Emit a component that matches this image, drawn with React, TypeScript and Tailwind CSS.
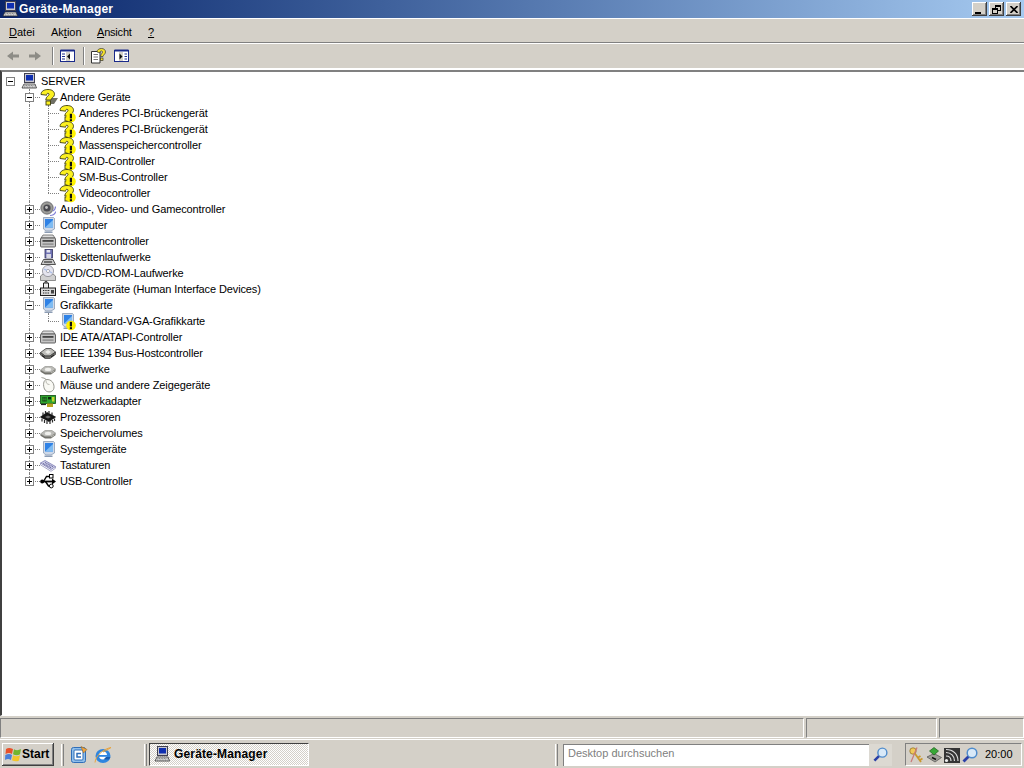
import type { ReactNode } from "react";

const raised = "shadow-[inset_-1px_-1px_0_#404040,inset_1px_1px_0_#ffffff,inset_-2px_-2px_0_#808080]";

function Ico({ children, w = 16, h = 16 }: { children: ReactNode; w?: number; h?: number }) {
  return (
    <svg width={w} height={h} viewBox={`0 0 ${w} ${h}`} className="shrink-0 block">
      {children}
    </svg>
  );
}

function ComputerIcon() {
  return (
    <Ico>
      <rect x="3.5" y="0.5" width="10" height="9" fill="#c8c8d0" stroke="#404050" />
      <rect x="5" y="2" width="7" height="5.5" fill="#0f2fb0" />
      <path d="M1 15 L3 11 H14 L15.5 15 Z" fill="#e8e8e8" stroke="#303030" strokeWidth="0.8" />
      <path d="M3.5 12.5 H13.5 M3 14 H14" stroke="#505050" strokeWidth="0.7" strokeDasharray="1 0.6" />
    </Ico>
  );
}

function QuestionGlyph() {
  return (
    <g>
      <path
        d="M1 5.5 C1 2 4.5 0.5 8 0.5 C12 0.5 14.5 2.5 14.5 5.3 C14.5 8.4 11.2 8.8 10.8 11 H5.8 C5.8 7.4 9 7 9 5.4 C9 4.6 8.5 4.3 8 4.3 C7 4.3 6.6 5 6.6 6.2 Z"
        fill="#fbf020"
        stroke="#3c3c12"
        strokeWidth="0.9"
      />
      <rect x="6" y="12" width="4.5" height="4" fill="#fbf020" stroke="#3c3c12" strokeWidth="0.9" />
    </g>
  );
}

function UnknownIcon() {
  return (
    <Ico w={18} h={18}>
      <path d="M8 15 L11 9 H18 L14 15 Z" fill="#6f6f64" />
      <QuestionGlyph />
    </Ico>
  );
}

function WarnBadge() {
  return (
    <g>
      <circle cx="12" cy="12.5" r="4.8" fill="#fff200" />
      <rect x="10.8" y="8.8" width="2.2" height="4.6" fill="#101010" />
      <rect x="10.8" y="14.2" width="2.2" height="2" fill="#101010" />
    </g>
  );
}

function UnknownWarnIcon() {
  return (
    <Ico w={18} h={18}>
      <QuestionGlyph />
      <WarnBadge />
    </Ico>
  );
}

function MonitorShape() {
  return (
    <>
      <path d="M3.5 0.5 H13.5 L14.5 1.5 V12 L11 14 H6 L3.5 12 Z" fill="#cfd9e8" stroke="#7f90a8" strokeWidth="0.7" />
      <rect x="5" y="2" width="8" height="8.5" fill="#2f82e6" />
      <path d="M5 10.5 L13 3 V10.5 Z" fill="#7fbcf2" />
      <path d="M4.5 14.5 H12.5 V16 H4.5 Z" fill="#8d9db4" />
    </>
  );
}

function MonitorIcon() {
  return (
    <Ico>
      <MonitorShape />
    </Ico>
  );
}

function MonitorWarnIcon() {
  return (
    <Ico w={18} h={18}>
      <MonitorShape />
      <WarnBadge />
    </Ico>
  );
}

function SpeakerIcon() {
  return (
    <Ico>
      <circle cx="7" cy="7" r="6.2" fill="#9c9c98" stroke="#55555a" strokeWidth="0.7" />
      <circle cx="7" cy="7" r="3.6" fill="#4a4a50" />
      <circle cx="6.5" cy="6.5" r="1.4" fill="#c4c4c4" />
      <path d="M13 10 C14.5 9 15.5 7.5 15.5 5.5 M10 14.5 C12.5 14.5 15 13 16 10.5" stroke="#8282d8" strokeWidth="1.2" fill="none" />
    </Ico>
  );
}

function FloppyDriveIcon() {
  return (
    <Ico>
      <path d="M1 5 L3 2 H13 L15 5 Z" fill="#dcdcdc" stroke="#555" strokeWidth="0.7" />
      <rect x="0.5" y="5" width="15" height="9" rx="1" fill="#c4c4c4" stroke="#444" strokeWidth="0.8" />
      <rect x="2.5" y="7" width="11" height="1.8" fill="#444" />
      <rect x="2.5" y="10.4" width="11" height="1.4" fill="#8a8a8a" />
    </Ico>
  );
}

function FloppyPcIcon() {
  return (
    <Ico>
      <rect x="5" y="0.5" width="7.5" height="8.5" fill="#6f72b4" stroke="#34345c" strokeWidth="0.8" />
      <rect x="6.6" y="1" width="3.6" height="2.5" fill="#e4e4ee" />
      <rect x="6.4" y="5" width="4.6" height="4" fill="#d8d8e4" />
      <path d="M1 15.5 L3.5 10.5 H13 L15.5 15.5 Z" fill="#c8c8c8" stroke="#303030" strokeWidth="0.8" />
      <path d="M4 13 H12" stroke="#333" strokeWidth="1.2" />
    </Ico>
  );
}

function CdIcon() {
  return (
    <Ico>
      <path d="M0.5 11 L3 9 H13 L15.5 11 V15.5 H0.5 Z" fill="#d0d0d0" stroke="#666" strokeWidth="0.7" />
      <circle cx="8" cy="6" r="5.6" fill="#e4e4ee" stroke="#808088" strokeWidth="0.7" />
      <circle cx="8" cy="6" r="1.6" fill="#fff" stroke="#808088" strokeWidth="0.6" />
      <path d="M4 4 L7 5.5 M12 8 L9.5 6.5" stroke="#a8bde8" strokeWidth="1.2" />
    </Ico>
  );
}

function InputIcon() {
  return (
    <Ico>
      <path d="M3.5 7 V2 H8.5 V7" fill="#ededed" stroke="#1f1f1f" strokeWidth="1" />
      <path d="M5 2 V0.5 H7 V2" fill="none" stroke="#1f1f1f" strokeWidth="0.8" />
      <rect x="0.5" y="7" width="15" height="7.5" fill="#d8d8d8" stroke="#1f1f1f" />
      <path d="M3 9.5 H10 M3 12 H9" stroke="#222" strokeWidth="1.1" strokeDasharray="1 0.7" />
      <rect x="11" y="9" width="3" height="3.5" fill="#444" />
    </Ico>
  );
}

function ChipDriveIcon() {
  return (
    <Ico>
      <path d="M0.5 7.5 L6 3.5 H11 L15.5 7 L10 11 H5 Z" fill="#bdbdb9" stroke="#3f3f3f" strokeWidth="0.8" />
      <path d="M0.5 7.5 V10 L5 13.5 H10 L15.5 9.5 V7 L10 11 H5 Z" fill="#6e6e6a" stroke="#3a3a3a" strokeWidth="0.7" />
      <path d="M5 7 L8 5 L11 7 L8 9 Z" fill="#ededea" />
      <path d="M2 10.5 L5 12.5 M11 12 L14 10" stroke="#111" strokeWidth="0.9" />
    </Ico>
  );
}

function DiskIcon() {
  return (
    <Ico>
      <path d="M0.5 9 L5 5.5 H12 L15.5 8 L11 11.5 H5 Z" fill="#bcbcb8" stroke="#8a8a85" strokeWidth="0.6" />
      <path d="M0.5 9 V10.8 L5 13.5 H11 L15.5 10.2 V8 L11 11.5 H5 Z" fill="#72726c" />
      <ellipse cx="8" cy="8.4" rx="3.2" ry="1.6" fill="#efefec" />
      <path d="M11 12 L14.5 9.8" stroke="#d8d8d0" strokeWidth="0.7" />
    </Ico>
  );
}

function MouseIcon() {
  return (
    <Ico>
      <path d="M7 2.5 C3 2.5 3 9 4.5 12 C6.2 15.6 11.5 16 13.5 12.5 C15 9.5 13.5 2.5 7 2.5 Z" fill="#f9f9f4" stroke="#8a8a82" strokeWidth="0.9" />
      <path d="M6 3.5 C6 6 7 7.5 9.5 7.5" stroke="#a8a8a0" strokeWidth="0.8" fill="none" />
      <path d="M6 2.5 C5 1 3 1 1.5 0.5" stroke="#92928a" strokeWidth="0.9" fill="none" />
    </Ico>
  );
}

function NetworkIcon() {
  return (
    <Ico>
      <rect x="0.5" y="2.5" width="15" height="8" fill="#2fa52f" stroke="#0f4a10" strokeWidth="0.8" />
      <rect x="2.5" y="4" width="4" height="4.5" fill="#0d2f0d" />
      <path d="M3.8 4 V8.5 M5.2 4 V8.5 M2.5 6.2 H6.5" stroke="#49c049" strokeWidth="0.5" />
      <rect x="8" y="4" width="3" height="2.4" fill="#0d2f0d" />
      <rect x="12" y="4" width="2.4" height="4.5" fill="#c5d62e" />
      <path d="M7 10.5 H13 V14 H7 Z" fill="#b7a41f" />
      <path d="M1 11.5 H6" stroke="#222" strokeWidth="1.2" />
    </Ico>
  );
}

function CpuIcon() {
  return (
    <Ico>
      <path d="M0.5 8 L7 3.5 L15.5 8 L9 12.5 Z" fill="#161616" stroke="#000" strokeWidth="0.7" />
      <path d="M2 9.5 V12.5 M4.5 11 V14 M7 12 V15 M10 12 V15 M12.5 11 V13.5 M14.5 9.5 V12 M3 6 V3.5 M5.5 4.5 V2 M9 4.5 V2 M12 6 V3.5" stroke="#2a2a2a" strokeWidth="1.2" />
      <path d="M5 8 L8 6.5 L11 8 L8 9.5 Z" fill="#6a6a6a" />
    </Ico>
  );
}

function KeyboardIcon() {
  return (
    <Ico>
      <path d="M0.5 6 L5 3.5 L15.5 9.5 L11 12.5 Z" fill="#cfcfe8" stroke="#7c7cb2" strokeWidth="0.8" />
      <path d="M3 6.5 L11.5 11 M5 5.5 L13.2 10" stroke="#66669e" strokeWidth="1.1" strokeDasharray="1 0.6" />
      <path d="M0.5 6 V7.8 L11 14.3 L15.5 11.2 V9.5" fill="none" stroke="#9090ba" strokeWidth="0.8" />
    </Ico>
  );
}

function UsbIcon() {
  return (
    <Ico>
      <path d="M1.5 8.5 H13" stroke="#000" strokeWidth="1.8" />
      <path d="M12 5.5 L16 8.5 L12 11.5 Z" fill="#000" />
      <path d="M3.5 8.5 L6.5 3.5 H10" stroke="#000" strokeWidth="1.4" fill="none" />
      <rect x="9.5" y="1.5" width="3.5" height="3.5" fill="#fff" stroke="#000" />
      <path d="M5.5 8.5 L8.5 13 H10" stroke="#000" strokeWidth="1.4" fill="none" />
      <circle cx="11.3" cy="13" r="1.9" fill="#fff" stroke="#000" />
      <circle cx="2.2" cy="8.5" r="2" fill="#000" />
    </Ico>
  );
}

// - / + box on tree nodes
function Expander({ open }: { open: boolean }) {
  return (
    <span className="relative z-10 block h-[9px] w-[9px] border border-[#808080] bg-white">
      <span className="absolute left-[1px] top-[3px] h-px w-[5px] bg-black" />
      {!open && <span className="absolute left-[3px] top-[1px] h-[5px] w-px bg-black" />}
    </span>
  );
}

type RowProps = {
  level: 1 | 2;
  open?: boolean;
  lastChild?: boolean;
  lastTop?: boolean;
  icon: ReactNode;
  label: string;
};

function TreeRow({ level, open, lastChild, lastTop, icon, label }: RowProps) {
  return (
    <div className="flex h-4 items-center">
      <span className="w-[19px] shrink-0" />
      <span className={`relative flex h-4 shrink-0 items-center pl-[5px] ${level === 1 ? "w-[20px]" : "w-[19px]"}`}>
        <span className={`absolute left-[9px] top-0 border-l border-dotted border-[#808080] ${lastTop ? "h-2" : "h-4"}`} />
        {level === 1 && <span className="absolute left-[9px] top-2 w-[11px] border-t border-dotted border-[#808080]" />}
        {level === 1 && <Expander open={!!open} />}
      </span>
      {level === 2 && (
        <span className="relative h-4 w-[20px] shrink-0">
          <span className={`absolute left-[9px] top-0 border-l border-dotted border-[#808080] ${lastChild ? "h-2" : "h-4"}`} />
          <span className="absolute left-[9px] top-2 w-[11px] border-t border-dotted border-[#808080]" />
        </span>
      )}
      <span className="relative z-10 h-4 w-4 shrink-0">{icon}</span>
      <span className="ml-[4px] whitespace-nowrap tracking-[-0.12px]">{label}</span>
    </div>
  );
}

function RootRow() {
  return (
    <div className="flex h-4 items-center">
      <span className="flex h-4 w-[20px] shrink-0 items-center pl-[5px]">
        <Expander open />
      </span>
      <span className="relative z-10 h-4 w-4 shrink-0">
        <ComputerIcon />
      </span>
      <span className="ml-[4px] whitespace-nowrap tracking-[-0.12px]">SERVER</span>
    </div>
  );
}

const devices: RowProps[] = [
  { level: 1, open: true, icon: <UnknownIcon />, label: "Andere Geräte" },
  { level: 2, icon: <UnknownWarnIcon />, label: "Anderes PCI-Brückengerät" },
  { level: 2, icon: <UnknownWarnIcon />, label: "Anderes PCI-Brückengerät" },
  { level: 2, icon: <UnknownWarnIcon />, label: "Massenspeichercontroller" },
  { level: 2, icon: <UnknownWarnIcon />, label: "RAID-Controller" },
  { level: 2, icon: <UnknownWarnIcon />, label: "SM-Bus-Controller" },
  { level: 2, lastChild: true, icon: <UnknownWarnIcon />, label: "Videocontroller" },
  { level: 1, icon: <SpeakerIcon />, label: "Audio-, Video- und Gamecontroller" },
  { level: 1, icon: <MonitorIcon />, label: "Computer" },
  { level: 1, icon: <FloppyDriveIcon />, label: "Diskettencontroller" },
  { level: 1, icon: <FloppyPcIcon />, label: "Diskettenlaufwerke" },
  { level: 1, icon: <CdIcon />, label: "DVD/CD-ROM-Laufwerke" },
  { level: 1, icon: <InputIcon />, label: "Eingabegeräte (Human Interface Devices)" },
  { level: 1, open: true, icon: <MonitorIcon />, label: "Grafikkarte" },
  { level: 2, lastChild: true, icon: <MonitorWarnIcon />, label: "Standard-VGA-Grafikkarte" },
  { level: 1, icon: <FloppyDriveIcon />, label: "IDE ATA/ATAPI-Controller" },
  { level: 1, icon: <ChipDriveIcon />, label: "IEEE 1394 Bus-Hostcontroller" },
  { level: 1, icon: <DiskIcon />, label: "Laufwerke" },
  { level: 1, icon: <MouseIcon />, label: "Mäuse und andere Zeigegeräte" },
  { level: 1, icon: <NetworkIcon />, label: "Netzwerkadapter" },
  { level: 1, icon: <CpuIcon />, label: "Prozessoren" },
  { level: 1, icon: <DiskIcon />, label: "Speichervolumes" },
  { level: 1, icon: <MonitorIcon />, label: "Systemgeräte" },
  { level: 1, icon: <KeyboardIcon />, label: "Tastaturen" },
  { level: 1, lastTop: true, icon: <UsbIcon />, label: "USB-Controller" },
];

function WinBtn({ children }: { children: ReactNode }) {
  return (
    <span className={`relative ml-[2px] flex h-[14px] w-[15px] items-center justify-center bg-[#d4d0c8] ${raised}`}>
      {children}
    </span>
  );
}

function Menu({ pre, u, post, className = "" }: { pre?: string; u: string; post?: string; className?: string }) {
  return (
    <span className={`whitespace-nowrap ${className}`}>
      {pre}
      <span className="underline underline-offset-1">{u}</span>
      {post}
    </span>
  );
}

function PanelIcon({ flip }: { flip?: boolean }) {
  return (
    <Ico w={15} h={14}>
      <rect x="0.5" y="1.5" width="14" height="11" fill="#fff" stroke="#1a2a8a" />
      <rect x="0.5" y="0.5" width="14" height="2" fill="#1a2a8a" />
      <path d={flip ? "M5 3 H9 V12 H5 Z" : "M6 3 H10 V12 H6 Z"} fill="#d4d0c8" />
      {flip ? (
        <>
          <path d="M5.5 4.5 V10.5 L8.5 7.5 Z" fill="#101010" />
          <path d="M10.5 5 H13 M10.5 7.5 H13 M10.5 10 H13" stroke="#1a2a8a" />
        </>
      ) : (
        <>
          <path d="M2 5 H5 M2 7.5 H5 M2 10 H5" stroke="#1a2a8a" />
          <path d="M10 4.5 V10.5 L7 7.5 Z" fill="#101010" />
        </>
      )}
    </Ico>
  );
}

function HelpIcon() {
  return (
    <Ico>
      <path d="M1.5 3.5 H10 V15 H1.5 Z" fill="#fff" stroke="#333" />
      <path d="M3.5 6.5 H8 M3.5 9 H8 M3.5 11.5 H8" stroke="#777" />
      <path
        d="M7 4 C7 1.5 9.5 0.5 11.5 0.5 C14 0.5 15.5 2 15.5 4 C15.5 6 13.5 6.5 13 8.5 H10.5 C10.5 6 12.5 5.5 12.5 4 C12.5 3 11.5 2.8 11 3 C10 3.2 10 4 10 4.8 Z"
        fill="#f7e32a"
        stroke="#333"
        strokeWidth="0.7"
      />
      <rect x="10.5" y="10" width="2.5" height="2.5" fill="#f7e32a" stroke="#333" strokeWidth="0.7" />
    </Ico>
  );
}

function Arrow({ right }: { right?: boolean }) {
  return (
    <svg width="14" height="12" viewBox="0 0 14 12" className="block">
      <path
        d={right ? "M1 4.5 H7 V1.5 L13 6 L7 10.5 V7.5 H1 Z" : "M13 4.5 H7 V1.5 L1 6 L7 10.5 V7.5 H13 Z"}
        fill="#8d8c86"
      />
    </svg>
  );
}

function WinFlag() {
  return (
    <svg width="17" height="16" viewBox="0 0 17 16" className="block">
      <path d="M1 3 C3 1.5 5 1.5 8 3 L7 8 C5 6.8 3 6.8 0.5 8 Z" fill="#e8502a" />
      <path d="M9 3.2 C11 4.5 13.5 4.5 16 3 L15 8.2 C13 9.5 10.5 9.5 8 8.2 Z" fill="#72b52e" />
      <path d="M0.3 9 C3 7.8 5 7.8 7 9 L6 14 C4 12.8 2 12.8 0 14 Z" fill="#4a7fd8" />
      <path d="M8 9.2 C10.5 10.5 12.5 10.5 15 9.2 L14 14.4 C12 15.6 9.5 15.6 7 14.2 Z" fill="#f3c52a" />
    </svg>
  );
}

function OutlookIcon() {
  return (
    <Ico w={18} h={18}>
      <rect x="1.5" y="1.5" width="14" height="15" rx="2" fill="#8fbeea" stroke="#2f6eb8" />
      <rect x="4" y="4" width="9" height="10" rx="1" fill="#fff" stroke="#2f6eb8" />
      <path d="M11 7.5 H7 V11 H11" fill="none" stroke="#2f6eb8" strokeWidth="1.5" />
      <path d="M11 0.5 L17 3.5 L13.5 7 Z" fill="#f0a540" stroke="#8d5d16" strokeWidth="0.5" />
    </Ico>
  );
}

function IeIcon() {
  return (
    <Ico w={18} h={18}>
      <ellipse cx="9" cy="10" rx="7.5" ry="7" fill="#2f86e0" />
      <circle cx="9" cy="9.5" r="4" fill="#fff" />
      <rect x="5" y="9" width="8" height="1.8" fill="#2f86e0" />
      <path d="M9.5 13.5 H15 L16.5 11 H12 Z" fill="#1a5cad" />
      <path d="M1 16.5 C1.5 10 9 3 17 1.5 C14 3.5 11.5 5 9 6" stroke="#e9a53d" strokeWidth="1" fill="none" />
    </Ico>
  );
}

function LensIcon({ size = 16 }: { size?: number }) {
  return (
    <svg width={size} height={size} viewBox="0 0 16 16" className="block shrink-0">
      <circle cx="10" cy="6" r="4.8" fill="#d8e9f8" stroke="#4f8ccc" strokeWidth="1.5" />
      <path d="M6.3 9.7 L1.5 14.5" stroke="#2a3fa6" strokeWidth="2.8" />
    </svg>
  );
}

function KeysIcon() {
  return (
    <Ico>
      <circle cx="5" cy="4" r="3.2" fill="#f0c95a" stroke="#8a6a20" strokeWidth="0.7" />
      <path d="M6.5 6 L13 15 M10 10.5 L12.5 9 M12 13 L14.5 11.5" stroke="#c9982f" strokeWidth="1.8" />
      <path d="M9 0.5 L3 15" stroke="#c87878" strokeWidth="1.2" />
    </Ico>
  );
}

function BoxIcon() {
  return (
    <Ico>
      <path d="M1 10 L8 6.5 L15.5 10.5 L9 15 Z" fill="#9e9e98" stroke="#4a4a4a" strokeWidth="0.7" />
      <path d="M3.5 4 L8 0.5 L12.5 4 L8 8 Z" fill="#37a837" stroke="#1a5c1a" strokeWidth="0.7" />
      <path d="M6 10.5 L10 12.5" stroke="#111" strokeWidth="1.4" />
    </Ico>
  );
}

function SignalIcon() {
  return (
    <Ico>
      <rect x="0" y="1" width="16" height="15" fill="#343434" />
      <circle cx="2.5" cy="13.5" r="1.6" fill="#eee" />
      <path d="M2 9 C5 9 7 11 7 14 M2 5.5 C7 5.5 10.5 9 10.5 14 M2 2.5 C9 2.5 14 7 14 14" fill="none" stroke="#dcdcdc" strokeWidth="1.2" />
    </Ico>
  );
}

export default function App() {
  return (
    <div className="flex h-[768px] w-[1024px] flex-col overflow-hidden bg-[#d4d0c8] font-['Liberation_Sans','DejaVu_Sans',sans-serif] text-[11px] leading-none text-black">
      {/* title bar */}
      <div className="flex h-[18px] shrink-0 items-center justify-between bg-gradient-to-r from-[#0a246a] to-[#a6caf0]">
        <div className="flex items-center pl-[2px]">
          <ComputerIcon />
          <span className="ml-[1px] text-[12px] font-bold tracking-[0.2px] text-white">Geräte-Manager</span>
        </div>
        <div className="flex items-center pr-[3px]">
          <WinBtn>
            <span className="mt-[7px] mr-[3px] h-[2px] w-[6px] bg-black" />
          </WinBtn>
          <WinBtn>
            <span className="relative block h-[9px] w-[9px]">
              <span className="absolute right-0 top-0 h-[6px] w-[6px] border border-t-2 border-black" />
              <span className="absolute bottom-0 left-0 h-[6px] w-[6px] border border-t-2 border-black bg-[#d4d0c8]" />
            </span>
          </WinBtn>
          <WinBtn>
            <svg width="8" height="7" viewBox="0 0 8 7">
              <path d="M0.5 0 L7.5 7 M7.5 0 L0.5 7" stroke="#000" strokeWidth="1.6" />
            </svg>
          </WinBtn>
        </div>
      </div>

      {/* menu */}
      <div className="flex h-[26px] shrink-0 items-center border-t border-b border-t-white border-b-white pl-[9px] pt-[2px] shadow-[inset_0_-1px_0_#808080]">
        <Menu u="D" post="atei" className="w-[42px]" />
        <Menu pre="Ak" u="t" post="ion" className="w-[46px]" />
        <Menu u="A" post="nsicht" className="w-[51px] tracking-[-0.2px]" />
        <Menu u="?" />
      </div>

      {/* toolbar */}
      <div className="flex h-[24px] shrink-0 items-center">
        <div className="ml-[6px] flex w-[44px] items-center gap-[8px]">
          <Arrow />
          <Arrow right />
        </div>
        <span className="ml-[2px] h-[18px] w-[2px] border-l border-r border-l-[#808080] border-r-white" />
        <span className="ml-[6px]">
          <PanelIcon />
        </span>
        <span className="ml-[8px] h-[18px] w-[2px] border-l border-r border-l-[#808080] border-r-white" />
        <span className="ml-[5px]">
          <HelpIcon />
        </span>
        <span className="ml-[8px]">
          <PanelIcon flip />
        </span>
      </div>

      {/* device tree */}
      <div className="flex-1 border-t-2 border-t-white">
        <div className="h-full border-t-2 border-l-2 border-b border-t-[#808080] border-l-[#404040] border-b-white bg-white pt-[1px]">
          <div className="-ml-[1px]">
            <RootRow />
            {devices.map((d, i) => (
              <TreeRow key={i} {...d} />
            ))}
          </div>
        </div>
      </div>

      {/* status bar */}
      <div className="flex h-[23px] shrink-0 gap-[2px] pt-[2px] pb-[1px]">
        <span className="w-[804px] border border-t-[#808080] border-l-[#808080] border-b-white border-r-white" />
        <span className="w-[131px] border border-t-[#808080] border-l-[#808080] border-b-white border-r-white" />
        <span className="flex-1 border border-t-[#808080] border-l-[#808080] border-b-white border-r-white" />
      </div>

      {/* taskbar */}
      <div className="flex h-[29px] shrink-0 items-center border-t border-t-white pt-[1px] text-[12px]">
        <div className={`ml-[2px] flex h-[23px] w-[52px] items-center bg-[#d4d0c8] pb-[1px] pl-[3px] ${raised}`}>
          <WinFlag />
          <span className="font-bold">Start</span>
        </div>
        <span className="ml-[7px] h-[22px] w-[3px] border-l border-r border-l-white border-r-[#808080]" />
        <div className="ml-[6px] flex w-[57px] gap-[6px]">
          <OutlookIcon />
          <IeIcon />
        </div>
        <span className="ml-[17px] h-[22px] w-[3px] border-l border-r border-l-white border-r-[#808080]" />
        <div className="ml-[2px] flex h-[23px] w-[160px] items-center border border-t-[#404040] border-l-[#404040] border-r-white border-b-white bg-[repeating-conic-gradient(#ffffff_0_25%,#d4d0c8_0_50%)] bg-[length:2px_2px] pb-[1px] pl-[4px] font-bold">
          <ComputerIcon />
          <span className="ml-[4px] tracking-[0.15px]">Geräte-Manager</span>
        </div>
        <span className="ml-[246px] h-[22px] w-[3px] border-l border-r border-l-white border-r-[#808080]" />
        <div className="ml-[5px] flex h-[22px] w-[306px] items-center border-t border-l border-t-[#808080] border-l-[#808080] bg-white pb-[3px] pl-[4px] text-[11px] text-[#808080]">
          Desktop durchsuchen
        </div>
        <div className="flex h-[22px] w-[23px] items-center justify-center bg-[#dcd9d2]">
          <LensIcon size={15} />
        </div>
        <div className="ml-[13px] flex h-[23px] w-[117px] items-center gap-[2px] border border-t-[#808080] border-l-[#808080] border-r-white border-b-white pl-[2px]">
          <KeysIcon />
          <BoxIcon />
          <SignalIcon />
          <LensIcon />
          <span className="ml-[5px] text-[11px]">20:00</span>
        </div>
      </div>
    </div>
  );
}
